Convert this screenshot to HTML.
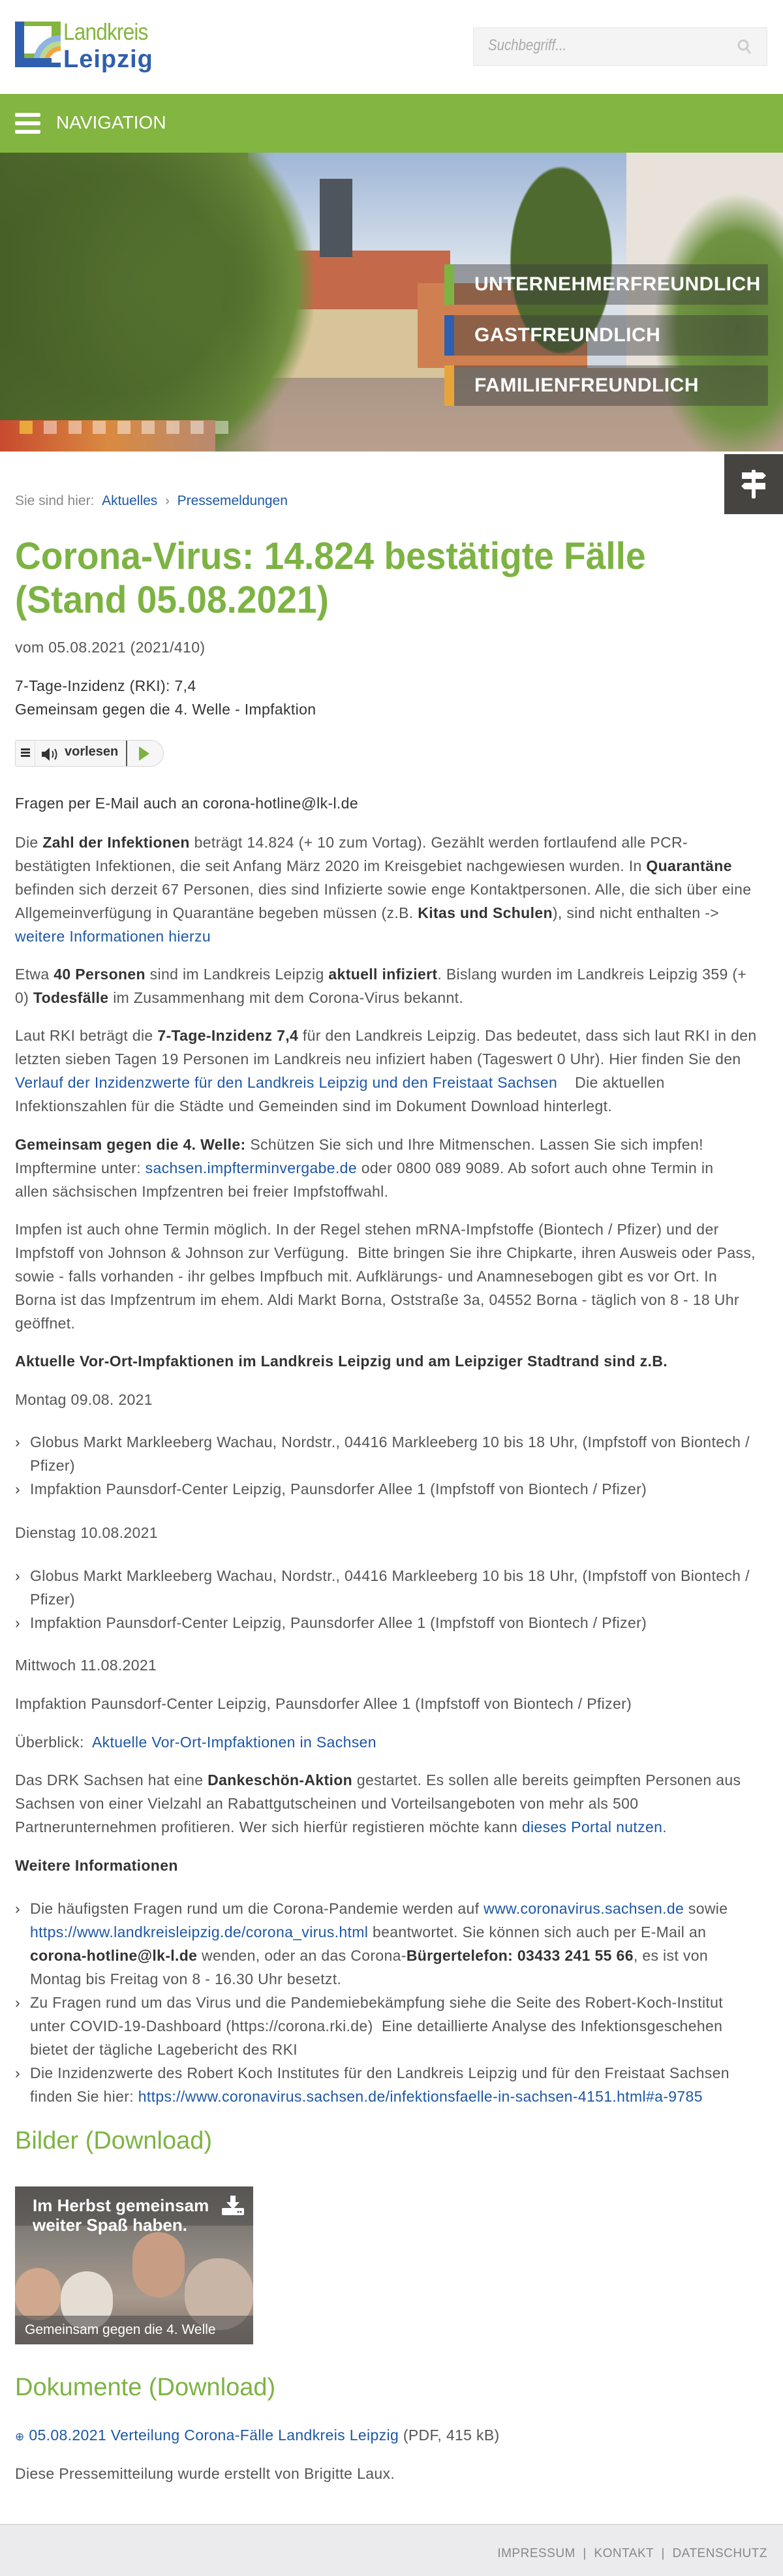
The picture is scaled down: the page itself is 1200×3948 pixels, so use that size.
<!DOCTYPE html>
<html><head><meta charset="utf-8"><style>
*{margin:0;padding:0;box-sizing:border-box}
body{width:1200px;height:3948px;position:relative;background:#fff;font-family:"Liberation Sans",sans-serif;color:#555;overflow:hidden}
.a{position:absolute;white-space:nowrap}
.t{font-size:23px;line-height:36px;left:23px;letter-spacing:.35px}
b{color:#333}
a{color:#1d57a5;text-decoration:none}
.li{padding-left:23px;position:relative}
.li:before{content:"›";position:absolute;left:0;color:#444}
.hero div{position:absolute}
.ov{position:absolute;left:681px;width:496px;height:62px;background:rgba(60,60,60,.45);color:#fff;font-weight:bold;font-size:30px;line-height:62px;padding-left:46px;letter-spacing:.5px}
.ov i{position:absolute;left:0;top:0;width:15px;height:62px}
.dot{position:absolute;top:645px;width:20px;height:20px;background:rgba(255,255,255,.45)}
</style></head><body>

<!-- logo -->
<div class="a" style="left:23px;top:33px;width:70px;height:70px;background:#2f5fae"></div>
<div class="a" style="left:37px;top:33px;width:56px;height:56px;background:#84b53f"></div>
<div class="a" style="left:37px;top:40px;width:42px;height:42px;background:#fff"></div>
<div class="a" style="left:37px;top:40px;width:56px;height:56px;border-radius:56px 0 0 0;background:radial-gradient(circle at 100% 100%,#fff 0 18px,#f0a640 18px 25px,#bcd88f 25px 33px,#8eb5e0 33px 42px,transparent 42px);"></div>
<div class="a" style="left:23px;top:89px;width:56px;height:14px;background:#2f5fae"></div>
<div class="a" style="left:97px;top:28px;font-size:36px;color:#84b53f;letter-spacing:-1px;transform:scaleX(.88);transform-origin:left">Landkreis</div>
<div class="a" style="left:97px;top:70px;font-size:38px;font-weight:bold;color:#2f5fae;letter-spacing:1px">Leipzig</div>

<!-- search -->
<div class="a" style="left:725px;top:42px;width:451px;height:59px;background:#f4f4f4;border:1px solid #e6e6e6"></div>
<div class="a" style="left:748px;top:56px;font-size:24px;font-style:italic;color:#aaa;transform:scaleX(.85);transform-origin:left">Suchbegriff...</div>
<svg class="a" style="left:1130px;top:60px" width="22" height="24" viewBox="0 0 22 24"><circle cx="9" cy="9" r="7" fill="none" stroke="#ccc" stroke-width="3"/><path d="M14 14l6 8" stroke="#ccc" stroke-width="3"/></svg>

<!-- nav -->
<div class="a" style="left:0;top:144px;width:1200px;height:90px;background:#83b541"></div>
<div class="a" style="left:23px;top:173px;width:39px;height:6px;background:#fff;border-radius:2px"></div>
<div class="a" style="left:23px;top:186px;width:39px;height:6px;background:#fff;border-radius:2px"></div>
<div class="a" style="left:23px;top:199px;width:39px;height:6px;background:#fff;border-radius:2px"></div>
<div class="a" style="left:86px;top:172px;font-size:28px;color:#fff">NAVIGATION</div>

<!-- hero -->
<div class="a hero" style="left:0;top:234px;width:1200px;height:458px;overflow:hidden;background:#6f8a45">
 <div style="left:380px;top:0;width:600px;height:380px;background:linear-gradient(180deg,#9fb6d6,#dfe6ee 50%,#c9d2dc)"></div>
 <div style="left:960px;top:0;width:240px;height:360px;background:#e8e2da"></div>
 <div style="left:330px;top:330px;width:870px;height:128px;background:linear-gradient(180deg,#a89584,#b9a08e)"></div>
 <div style="left:410px;top:150px;width:280px;height:95px;background:#c46a4a"></div>
 <div style="left:410px;top:240px;width:280px;height:105px;background:#d7c49a"></div>
 <div style="left:490px;top:40px;width:50px;height:120px;background:#4f555c"></div>
 <div style="left:640px;top:200px;width:260px;height:130px;background:#d08050"></div>
 <div style="left:770px;top:0;width:180px;height:330px;background:radial-gradient(ellipse at 50% 50%,#4e6a2e 0 60%,transparent 62%)"></div>
 <div style="left:-80px;top:-40px;width:560px;height:540px;background:radial-gradient(ellipse at 45% 45%,#5d7a33 0,#4a6428 40%,#6f8f3d 65%,transparent 72%)"></div>
 <div style="left:0;top:0;width:420px;height:458px;background:linear-gradient(90deg,rgba(70,95,40,.9),rgba(90,120,50,.6) 80%,transparent)"></div>
 <div style="left:1000px;top:60px;width:260px;height:420px;background:radial-gradient(ellipse,#5e7f35 0,#6f9342 50%,transparent 70%)"></div>
 <div style="left:0;top:410px;width:330px;height:48px;background:linear-gradient(90deg,#c84a30,#d98a40,#b88a70)"></div>
</div>
<div class="ov" style="top:405px"><i style="background:#7db343"></i>UNTERNEHMERFREUNDLICH</div>
<div class="ov" style="top:483px"><i style="background:#2f5fae"></i>GASTFREUNDLICH</div>
<div class="ov" style="top:560px"><i style="background:#e8a43a"></i>FAMILIENFREUNDLICH</div>
<div class="dot" style="left:30px;background:#e9a83c"></div>
<div class="dot" style="left:67px"></div><div class="dot" style="left:105px"></div><div class="dot" style="left:142px"></div><div class="dot" style="left:180px"></div><div class="dot" style="left:217px"></div><div class="dot" style="left:255px"></div><div class="dot" style="left:292px"></div><div class="dot" style="left:330px"></div>

<!-- sign box -->
<div class="a" style="left:1110px;top:696px;width:90px;height:92px;background:#454440"></div>
<svg class="a" style="left:1133px;top:718px" width="44" height="48" viewBox="0 0 44 48"><rect x="19" y="2" width="6" height="44" rx="2" fill="#fff"/><path d="M4 6h32l5 5-5 5H4z" fill="#fff"/><path d="M40 22H8l-5 5 5 5h32z" fill="#fff"/></svg>

<!-- breadcrumb -->
<div class="a" style="left:23px;top:756px;font-size:21px;color:#888">Sie sind hier: &nbsp;<a>Aktuelles</a> &nbsp;<span style="color:#888">›</span>&nbsp; <a>Pressemeldungen</a></div>

<div class="a" style="left:23px;top:819px;font-size:58px;line-height:67px;font-weight:bold;color:#7db343;transform:scaleX(.95);transform-origin:left">Corona-Virus: 14.824 bestätigte Fälle<br>(Stand 05.08.2021)</div>

<div class="a t" style="top:974px">vom 05.08.2021 (2021/410)</div>
<div class="a t" style="top:1033px;color:#333">7-Tage-Inzidenz (RKI): 7,4<br>Gemeinsam gegen die 4. Welle - Impfaktion</div>

<!-- vorlesen -->
<div class="a" style="left:23px;top:1134px;width:228px;height:41px;border:1px solid #d6d6d6;border-radius:3px 22px 22px 3px;background:#f6f6f6"></div>
<div class="a" style="left:53px;top:1135px;width:1px;height:39px;background:#ddd"></div>
<div class="a" style="left:193px;top:1135px;width:2px;height:39px;background:#555"></div>
<div class="a" style="left:32px;top:1147px;width:14px;height:3px;background:#333;box-shadow:0 5px 0 #333,0 10px 0 #333"></div>
<svg class="a" style="left:63px;top:1145px" width="28" height="22" viewBox="0 0 28 22"><path d="M1 7h5l7-6v20l-7-6H1z" fill="#333"/><path d="M17 6q3 5 0 10M21 3q5 8 0 16" stroke="#333" stroke-width="2" fill="none"/></svg>
<div class="a" style="left:99px;top:1141px;font-size:20px;font-weight:bold;color:#333">vorlesen</div>
<div class="a" style="left:213px;top:1144px;width:0;height:0;border-left:16px solid #7db343;border-top:11px solid transparent;border-bottom:11px solid transparent"></div>

<div class="a t" style="top:1213px;color:#333">Fragen per E-Mail auch an corona-hotline@lk-l.de</div>

<div class="a t" style="top:1273px">Die <b>Zahl der Infektionen</b> beträgt 14.824 (+ 10 zum Vortag). Gezählt werden fortlaufend alle PCR-<br>bestätigten Infektionen, die seit Anfang März 2020 im Kreisgebiet nachgewiesen wurden. In <b>Quarantäne</b><br>befinden sich derzeit 67 Personen, dies sind Infizierte sowie enge Kontaktpersonen. Alle, die sich über eine<br>Allgemeinverfügung in Quarantäne begeben müssen (z.B. <b>Kitas und Schulen</b>), sind nicht enthalten -&gt;<br><a>weitere Informationen hierzu</a></div>

<div class="a t" style="top:1475px">Etwa <b>40 Personen</b> sind im Landkreis Leipzig <b>aktuell infiziert</b>. Bislang wurden im Landkreis Leipzig 359 (+<br>0) <b>Todesfälle</b> im Zusammenhang mit dem Corona-Virus bekannt.</div>

<div class="a t" style="top:1569px">Laut RKI beträgt die <b>7-Tage-Inzidenz 7,4</b> für den Landkreis Leipzig. Das bedeutet, dass sich laut RKI in den<br>letzten sieben Tagen 19 Personen im Landkreis neu infiziert haben (Tageswert 0 Uhr). Hier finden Sie den<br><a>Verlauf der Inzidenzwerte für den Landkreis Leipzig und den Freistaat Sachsen</a> &nbsp;&nbsp; Die aktuellen<br>Infektionszahlen für die Städte und Gemeinden sind im Dokument Download hinterlegt.</div>

<div class="a t" style="top:1736px"><b>Gemeinsam gegen die 4. Welle:</b> Schützen Sie sich und Ihre Mitmenschen. Lassen Sie sich impfen!<br>Impftermine unter: <a>sachsen.impfterminvergabe.de</a> oder 0800 089 9089. Ab sofort auch ohne Termin in<br>allen sächsischen Impfzentren bei freier Impfstoffwahl.</div>

<div class="a t" style="top:1866px">Impfen ist auch ohne Termin möglich. In der Regel stehen mRNA-Impfstoffe (Biontech / Pfizer) und der<br>Impfstoff von Johnson &amp; Johnson zur Verfügung.&nbsp; Bitte bringen Sie ihre Chipkarte, ihren Ausweis oder Pass,<br>sowie - falls vorhanden - ihr gelbes Impfbuch mit. Aufklärungs- und Anamnesebogen gibt es vor Ort. In<br>Borna ist das Impfzentrum im ehem. Aldi Markt Borna, Oststraße 3a, 04552 Borna - täglich von 8 - 18 Uhr<br>geöffnet.</div>

<div class="a t" style="top:2068px"><b>Aktuelle Vor-Ort-Impfaktionen im Landkreis Leipzig und am Leipziger Stadtrand sind z.B.</b></div>
<div class="a t" style="top:2127px">Montag 09.08. 2021</div>
<div class="a t" style="top:2192px"><div class="li">Globus Markt Markleeberg Wachau, Nordstr., 04416 Markleeberg 10 bis 18 Uhr, (Impfstoff von Biontech /<br>Pfizer)</div><div class="li">Impfaktion Paunsdorf-Center Leipzig, Paunsdorfer Allee 1 (Impfstoff von Biontech / Pfizer)</div></div>
<div class="a t" style="top:2331px">Dienstag 10.08.2021</div>
<div class="a t" style="top:2397px"><div class="li">Globus Markt Markleeberg Wachau, Nordstr., 04416 Markleeberg 10 bis 18 Uhr, (Impfstoff von Biontech /<br>Pfizer)</div><div class="li">Impfaktion Paunsdorf-Center Leipzig, Paunsdorfer Allee 1 (Impfstoff von Biontech / Pfizer)</div></div>
<div class="a t" style="top:2534px">Mittwoch 11.08.2021</div>
<div class="a t" style="top:2593px">Impfaktion Paunsdorf-Center Leipzig, Paunsdorfer Allee 1 (Impfstoff von Biontech / Pfizer)</div>
<div class="a t" style="top:2652px">Überblick:&nbsp; <a>Aktuelle Vor-Ort-Impfaktionen in Sachsen</a></div>
<div class="a t" style="top:2710px">Das DRK Sachsen hat eine <b>Dankeschön-Aktion</b> gestartet. Es sollen alle bereits geimpften Personen aus<br>Sachsen von einer Vielzahl an Rabattgutscheinen und Vorteilsangeboten von mehr als 500<br>Partnerunternehmen profitieren. Wer sich hierfür registieren möchte kann <a>dieses Portal nutzen</a>.</div>
<div class="a t" style="top:2841px"><b>Weitere Informationen</b></div>
<div class="a t" style="top:2907px"><div class="li">Die häufigsten Fragen rund um die Corona-Pandemie werden auf <a>www.coronavirus.sachsen.de</a> sowie<br><a>https://www.landkreisleipzig.de/corona_virus.html</a> beantwortet. Sie können sich auch per E-Mail an<br><b>corona-hotline@lk-l.de</b> wenden, oder an das Corona-<b>Bürgertelefon: 03433 241 55 66</b>, es ist von<br>Montag bis Freitag von 8 - 16.30 Uhr besetzt.</div><div class="li">Zu Fragen rund um das Virus und die Pandemiebekämpfung siehe die Seite des Robert-Koch-Institut<br>unter COVID-19-Dashboard (https://corona.rki.de)&nbsp; Eine detaillierte Analyse des Infektionsgeschehen<br>bietet der tägliche Lagebericht des RKI</div><div class="li">Die Inzidenzwerte des Robert Koch Institutes für den Landkreis Leipzig und für den Freistaat Sachsen<br>finden Sie hier: <a>https://www.coronavirus.sachsen.de/infektionsfaelle-in-sachsen-4151.html#a-9785</a></div></div>

<div class="a" style="left:23px;top:3260px;font-size:38px;color:#7db343">Bilder (Download)</div>

<!-- thumbnail -->
<div class="a" style="left:23px;top:3351px;width:365px;height:242px;overflow:hidden;background:linear-gradient(180deg,#6a6560,#8c8680 40%,#a99a8e 70%,#7a6e66)">
 <div style="position:absolute;left:180px;top:70px;width:80px;height:100px;border-radius:40px;background:#c79e84"></div>
 <div style="position:absolute;left:0;top:125px;width:70px;height:80px;border-radius:35px;background:#d0a88e"></div>
 <div style="position:absolute;left:70px;top:130px;width:80px;height:90px;border-radius:40px;background:#e4ddd4"></div>
 <div style="position:absolute;left:260px;top:110px;width:105px;height:110px;border-radius:50px;background:#c9b5a6"></div>
 <div style="position:absolute;left:0;top:0;width:365px;height:60px;background:rgba(70,70,70,.5)"></div>
 <div style="position:absolute;left:27px;top:14px;font-size:26px;line-height:30px;font-weight:bold;color:#fff;white-space:nowrap">Im Herbst gemeinsam<br>weiter Spaß haben.</div>
 <svg style="position:absolute;left:317px;top:14px" width="34" height="30" viewBox="0 0 34 30"><path d="M13 0h8v10h6l-10 11L7 10h6z" fill="#fff"/><rect x="0" y="19" width="34" height="11" rx="2" fill="#fff"/><circle cx="25" cy="25" r="1.5" fill="#555"/><circle cx="29" cy="25" r="1.5" fill="#555"/></svg>
 <div style="position:absolute;left:0;top:198px;width:365px;height:44px;background:rgba(80,80,80,.6);color:#fff;font-size:21px;line-height:44px;padding-left:15px;white-space:nowrap">Gemeinsam gegen die 4. Welle</div>
</div>

<div class="a" style="left:23px;top:3638px;font-size:38px;color:#7db343">Dokumente (Download)</div>
<div class="a t" style="top:3714px"><span style="font-size:17px;color:#1d57a5">⊕</span> <a>05.08.2021 Verteilung Corona-Fälle Landkreis Leipzig</a> (PDF, 415 kB)</div>
<div class="a t" style="top:3773px">Diese Pressemitteilung wurde erstellt von Brigitte Laux.</div>

<!-- footer -->
<div class="a" style="left:0;top:3868px;width:1200px;height:80px;background:#ebebed;border-top:2px solid #dcdcdc"></div>
<div class="a" style="right:24px;top:3903px;font-size:19px;color:#888;letter-spacing:.5px">IMPRESSUM &nbsp;|&nbsp; KONTAKT &nbsp;|&nbsp; DATENSCHUTZ</div>

</body></html>
